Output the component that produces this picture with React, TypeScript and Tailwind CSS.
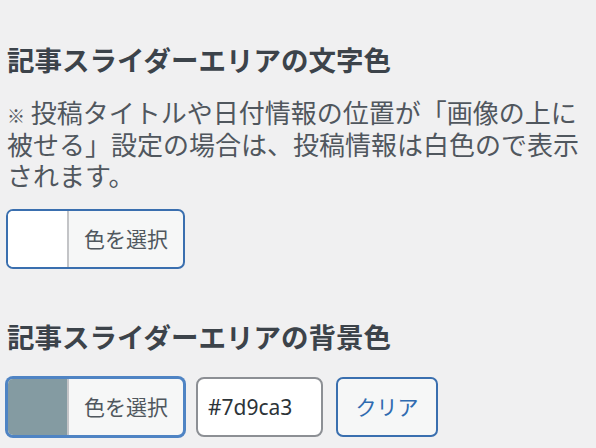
import React from "react";

const font = { fontFamily: '"Noto Sans CJK JP", "Noto Sans", sans-serif' };

function ColorButton({ swatch, focused }: { swatch: string; focused?: boolean }) {
  return (
    <button
      className={
        "flex h-[60px] w-[179px] items-stretch overflow-hidden rounded-[7px] border-2 bg-[#f6f7f7] " +
        (focused ? "border-[#4f84c4] ring-1 ring-[#4f84c4]" : "border-[#3a6faf]")
      }
    >
      <span className="w-[61px] border-r-2 border-[#c3c4c7]" style={{ backgroundColor: swatch }} />
      <span className="flex flex-1 items-center justify-center text-[21px] text-[#50575e]">色を選択</span>
    </button>
  );
}

export default function App() {
  return (
    <div className="min-h-[448px] w-[596px] bg-[#f0f0f1] pl-[7px] pt-[41px]" style={font}>
      <h2 className="text-[27.5px] font-bold leading-[36px] text-[#3c434a]">記事スライダーエリアの文字色</h2>
      <p className="mt-[19px] text-[26px] leading-[31.5px] text-[#50575e]">
        <span className="text-[18px] leading-none">※</span> 投稿タイトルや日付情報の位置が「画像の上に被せる」設定の場合は、投稿情報は白色ので表示されます。
      </p>
      <div className="mt-[18px] -ml-[1px]">
        <ColorButton swatch="#ffffff" />
      </div>

      <h2 className="mt-[49px] text-[27.5px] font-bold leading-[36px] text-[#3c434a]">記事スライダーエリアの背景色</h2>
      <div className="mt-[23px] -ml-[1px] flex items-center gap-[11px]">
        <ColorButton swatch="#849ba2" focused />
        <input
          readOnly
          value="#7d9ca3"
          className="h-[60px] w-[127px] rounded-[8px] border-2 border-[#8c8f94] bg-white px-[10px] text-[21px] text-[#2c3338] outline-none"
          style={{ fontFamily: '"Noto Sans", sans-serif' }}
        />
        <button className="ml-[2px] h-[60px] w-[102px] rounded-[7px] border-2 border-[#3a6faf] bg-[#f6f7f7] text-[21px] text-[#2f6bb0]">
          クリア
        </button>
      </div>
    </div>
  );
}
